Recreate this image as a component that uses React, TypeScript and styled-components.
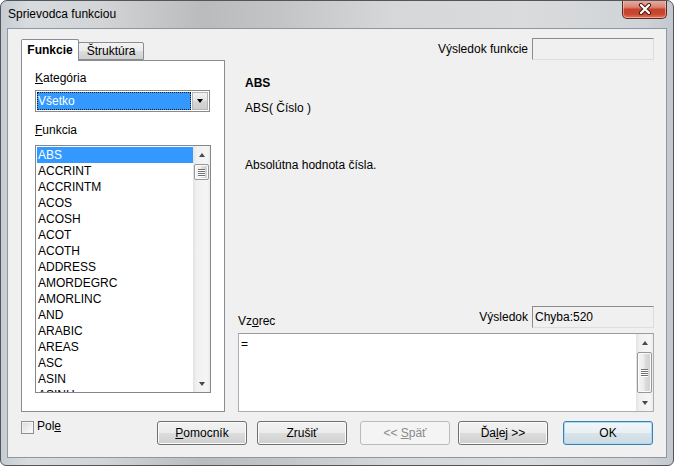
import styled, { createGlobalStyle } from 'styled-components'

const GlobalStyle = createGlobalStyle`
  html, body {
    margin: 0;
    padding: 0;
    background: #ffffff;
  }
  body {
    font-family: 'Liberation Sans', Arial, sans-serif;
    font-size: 12px;
    color: #000;
  }
`

const Window = styled.div`
  width: 674px;
  height: 466px;
  box-sizing: border-box;
  display: flex;
  flex-direction: column;
  border: 1px solid #50565c;
  border-radius: 7px 7px 6px 6px;
  padding: 0 6px 7px 6px;
  overflow: hidden;
  background: linear-gradient(
    90deg,
    #c6ccd2 0%,
    #d8dcdf 4%,
    #d2d4d6 15%,
    #b9bbbd 30%,
    #c3c5c7 42%,
    #d6d7d8 58%,
    #dadbdc 78%,
    #cfd3d7 96%,
    #c2c8ce 100%
  );
`

const TitleBar = styled.div`
  height: 27px;
  flex-shrink: 0;
  display: flex;
  align-items: flex-start;
  justify-content: space-between;
`

const Title = styled.div`
  padding: 6px 0 0 1px;
  line-height: 15px;
  color: #000;
`

const CloseButton = styled.div`
  width: 45px;
  height: 19px;
  box-sizing: border-box;
  margin-top: -1px;
  border: 1px solid #5b2a24;
  border-top: none;
  border-radius: 0 0 5px 5px;
  background: linear-gradient(#eab0a3 0%, #d98372 40%, #c5432e 52%, #c9452e 78%, #e0785a 100%);
  box-shadow: inset 0 0 0 1px rgba(255, 220, 210, 0.5);
  display: flex;
  align-items: center;
  justify-content: center;
`

const Client = styled.div`
  flex: 1;
  box-sizing: border-box;
  border: 1px solid #8e969e;
  background: #f0f0f0;
  display: grid;
  grid-template-columns: 204px 1fr;
  grid-template-rows: 1fr auto;
  column-gap: 13px;
  row-gap: 9px;
  padding: 9px 12px 12px 13px;
`

const LeftColumn = styled.div`
  display: flex;
  flex-direction: column;
`

const TabBar = styled.div`
  display: flex;
  align-items: flex-end;
  height: 22px;
  position: relative;
  z-index: 1;
`

const Tab = styled.div<{ $active?: boolean; $width: number }>`
  box-sizing: border-box;
  width: ${({ $width }) => $width}px;
  height: ${({ $active }) => ($active ? 22 : 18)}px;
  margin-bottom: ${({ $active }) => ($active ? -1 : 0)}px;
  margin-left: ${({ $active }) => ($active ? 0 : -1)}px;
  padding-top: ${({ $active }) => ($active ? 3 : 1)}px;
  text-align: center;
  border: 1px solid #898c95;
  border-bottom: ${({ $active }) => ($active ? 'none' : '1px solid #898c95')};
  border-radius: 2px 2px 0 0;
  background: ${({ $active }) =>
    $active ? '#ffffff' : 'linear-gradient(#f3f3f3, #ebebeb 50%, #dddddd 50%, #cfcfcf)'};
  font-weight: ${({ $active }) => ($active ? 'bold' : 'normal')};
  line-height: 15px;
  ${({ $active }) => ($active ? 'z-index: 2;' : '')}
`

const TabPanel = styled.div`
  flex: 1;
  box-sizing: border-box;
  border: 1px solid #898c95;
  background: #ffffff;
  display: flex;
  flex-direction: column;
  padding: 10px 0 0 13px;
`

const FieldLabel = styled.div<{ $top?: number }>`
  line-height: 15px;
  margin-top: ${({ $top }) => $top ?? 0}px;
`

const Key = styled.span`
  text-decoration: underline;
`

const Combo = styled.div`
  width: 175px;
  height: 22px;
  margin-top: 4px;
  box-sizing: border-box;
  border: 1px solid #8a8a8a;
  background: #ffffff;
  display: flex;
  padding: 1px;
`

const ComboValue = styled.div`
  flex: 1;
  background: #3399ff;
  color: #ffffff;
  outline: 1px dotted #1a1a1a;
  outline-offset: -1px;
  padding-left: 1px;
  line-height: 18px;
`

const ComboButton = styled.div`
  width: 16px;
  margin-left: 1px;
  box-sizing: border-box;
  border: 1px solid #b5b5b5;
  background: linear-gradient(#f2f2f2, #e4e4e4 50%, #d6d6d6 50%, #cdcdcd);
  display: flex;
  align-items: center;
  justify-content: center;
`

const DownGlyph = styled.div<{ $color?: string }>`
  width: 0;
  height: 0;
  border-left: 3.5px solid transparent;
  border-right: 3.5px solid transparent;
  border-top: 4px solid ${({ $color }) => $color ?? '#000'};
`

const UpGlyph = styled.div`
  width: 0;
  height: 0;
  border-left: 3.5px solid transparent;
  border-right: 3.5px solid transparent;
  border-bottom: 4px solid #4a4a4a;
`

const ListBox = styled.div`
  width: 176px;
  height: 248px;
  margin-top: 7px;
  box-sizing: border-box;
  border: 1px solid #828790;
  background: #ffffff;
  display: flex;
  overflow: hidden;
`

const Items = styled.div`
  flex: 1;
  padding: 1px 0 0 1px;
  overflow: hidden;
`

const Item = styled.div<{ $selected?: boolean }>`
  height: 16px;
  line-height: 16px;
  padding-left: 1px;
  background: ${({ $selected }) => ($selected ? '#3399ff' : 'transparent')};
  color: ${({ $selected }) => ($selected ? '#ffffff' : '#000')};
  white-space: nowrap;
`

const ScrollBar = styled.div`
  width: 17px;
  flex-shrink: 0;
  display: flex;
  flex-direction: column;
  background: linear-gradient(90deg, #e3e3e3, #f0f0f0 20%, #f5f5f5 80%, #ececec);
`

const ScrollArrow = styled.div`
  height: 17px;
  flex-shrink: 0;
  display: flex;
  align-items: center;
  justify-content: center;
`

const Track = styled.div`
  flex: 1;
  padding: 0 1px;
`

const Thumb = styled.div<{ $offset: number; $size: number }>`
  margin-top: ${({ $offset }) => $offset}px;
  height: ${({ $size }) => $size}px;
  box-sizing: border-box;
  border: 1px solid #979797;
  border-radius: 2px;
  background: linear-gradient(90deg, #f4f4f4, #ececec 45%, #dcdcdc 55%, #d0d0d0);
  box-shadow: inset 0 0 0 1px #fbfbfb;
  display: flex;
  flex-direction: column;
  align-items: center;
  justify-content: center;
  gap: 1px;
`

const Grip = styled.div`
  width: 7px;
  height: 1px;
  background: #6f6f6f;
  box-shadow: 0 1px 0 #ffffff;
`

const RightColumn = styled.div`
  display: flex;
  flex-direction: column;
`

const ResultRow = styled.div`
  display: flex;
  align-items: center;
  justify-content: flex-end;
  gap: 4px;
`

const ResultBox = styled.div`
  width: 122px;
  height: 22px;
  box-sizing: border-box;
  border: 1px solid #dddddd;
  border-top-color: #8c8c8c;
  border-left-color: #8c8c8c;
  background: #f0f0f0;
  padding-left: 2px;
  line-height: 20px;
`

const Description = styled.div`
  padding-left: 7px;
`

const DescLine = styled.div<{ $top: number; $bold?: boolean }>`
  margin-top: ${({ $top }) => $top}px;
  line-height: 15px;
  font-weight: ${({ $bold }) => ($bold ? 'bold' : 'normal')};
`

const FormulaHeader = styled.div`
  margin-top: auto;
  display: flex;
  align-items: flex-end;
  justify-content: space-between;
`

const FormulaBox = styled.div`
  margin-top: 5px;
  height: 79px;
  box-sizing: border-box;
  border: 1px solid #abadb3;
  border-top-color: #9a9ca1;
  background: #ffffff;
  display: flex;
`

const FormulaText = styled.div`
  flex: 1;
  padding: 3px 0 0 2px;
  line-height: 15px;
`

const BottomRow = styled.div`
  grid-column: 1 / span 2;
  display: flex;
  align-items: flex-start;
`

const CheckLabel = styled.label`
  display: flex;
  align-items: flex-start;
  gap: 3px;
  line-height: 15px;
  margin-top: -2px;
`

const CheckBox = styled.div`
  width: 13px;
  height: 13px;
  margin-top: 2px;
  box-sizing: border-box;
  border: 1px solid #8e8f8f;
  background: linear-gradient(135deg, #d8d8d8, #f4f4f4 70%, #fbfbfb);
  box-shadow: inset 0 0 0 1px #f4f4f4;
`

const Buttons = styled.div`
  margin-left: auto;
  margin-right: 1px;
  display: flex;
`

const Button = styled.button<{ $gap: number; $default?: boolean }>`
  margin: 0 0 0 ${({ $gap }) => $gap}px;
  width: 90px;
  height: 24px;
  padding: 0;
  box-sizing: border-box;
  border: 1px solid ${({ $default }) => ($default ? '#3c7fb1' : '#707070')};
  border-radius: 3px;
  background: ${({ $default }) =>
    $default
      ? 'linear-gradient(#f1f6f9, #e8f0f4 50%, #d8e4ea 50%, #cddbe2)'
      : 'linear-gradient(#f2f2f2, #ebebeb 50%, #dddddd 50%, #cfcfcf)'};
  box-shadow: inset 0 0 0 1px ${({ $default }) => ($default ? '#a8dcf3' : '#fbfbfb')};
  font-family: 'Liberation Sans', Arial, sans-serif;
  font-size: 12px;
  color: #000;

  &:disabled {
    border-color: #b8bcbf;
    background: #f4f4f4;
    box-shadow: none;
    color: #8a8a8a;
  }
`

const functions = [
  'ABS',
  'ACCRINT',
  'ACCRINTM',
  'ACOS',
  'ACOSH',
  'ACOT',
  'ACOTH',
  'ADDRESS',
  'AMORDEGRC',
  'AMORLINC',
  'AND',
  'ARABIC',
  'AREAS',
  'ASC',
  'ASIN',
  'ASINH',
]

const Scroller = ({ offset, size }: { offset: number; size: number }) => (
  <ScrollBar>
    <ScrollArrow>
      <UpGlyph />
    </ScrollArrow>
    <Track>
      <Thumb $offset={offset} $size={size}>
        <Grip />
        <Grip />
        <Grip />
        <Grip />
      </Thumb>
    </Track>
    <ScrollArrow>
      <DownGlyph $color="#4a4a4a" />
    </ScrollArrow>
  </ScrollBar>
)

export default function App() {
  return (
    <>
      <GlobalStyle />
      <Window>
        <TitleBar>
          <Title>Sprievodca funkciou</Title>
          <CloseButton>
            <svg width="14" height="12" viewBox="0 0 14 12">
              <path d="M3 2 L11 10 M11 2 L3 10" stroke="#4a1c16" strokeWidth="4.2" strokeLinecap="round" />
              <path d="M3 2 L11 10 M11 2 L3 10" stroke="#ffffff" strokeWidth="2.2" strokeLinecap="round" />
            </svg>
          </CloseButton>
        </TitleBar>
        <Client>
          <LeftColumn>
            <TabBar>
              <Tab $active $width={58}>
                Funkcie
              </Tab>
              <Tab $width={66}>Štruktúra</Tab>
            </TabBar>
            <TabPanel>
              <FieldLabel>
                <Key>K</Key>ategória
              </FieldLabel>
              <Combo>
                <ComboValue>Všetko</ComboValue>
                <ComboButton>
                  <DownGlyph />
                </ComboButton>
              </Combo>
              <FieldLabel $top={11}>
                <Key>F</Key>unkcia
              </FieldLabel>
              <ListBox>
                <Items>
                  {functions.map((name, i) => (
                    <Item key={name} $selected={i === 0}>
                      {name}
                    </Item>
                  ))}
                </Items>
                <Scroller offset={1} size={16} />
              </ListBox>
            </TabPanel>
          </LeftColumn>
          <RightColumn>
            <ResultRow>
              <span>Výsledok funkcie</span>
              <ResultBox />
            </ResultRow>
            <Description>
              <DescLine $top={16} $bold>
                ABS
              </DescLine>
              <DescLine $top={10}>ABS( Číslo )</DescLine>
              <DescLine $top={42}>Absolútna hodnota čísla.</DescLine>
            </Description>
            <FormulaHeader>
              <span>
                Vz<Key>o</Key>rec
              </span>
              <ResultRow>
                <span>Výsledok</span>
                <ResultBox>Chyba:520</ResultBox>
              </ResultRow>
            </FormulaHeader>
            <FormulaBox>
              <FormulaText>=</FormulaText>
              <Scroller offset={1} size={41} />
            </FormulaBox>
          </RightColumn>
          <BottomRow>
            <CheckLabel>
              <CheckBox />
              <span>
                Pol<Key>e</Key>
              </span>
            </CheckLabel>
            <Buttons>
              <Button $gap={0}>
                <Key>P</Key>omocník
              </Button>
              <Button $gap={10}>Zrušiť</Button>
              <Button $gap={13} disabled>
                {'<< '}
                <Key>S</Key>päť
              </Button>
              <Button $gap={8}>
                Ďa<Key>l</Key>ej {'>>'}
              </Button>
              <Button $gap={15} $default>
                OK
              </Button>
            </Buttons>
          </BottomRow>
        </Client>
      </Window>
    </>
  )
}
